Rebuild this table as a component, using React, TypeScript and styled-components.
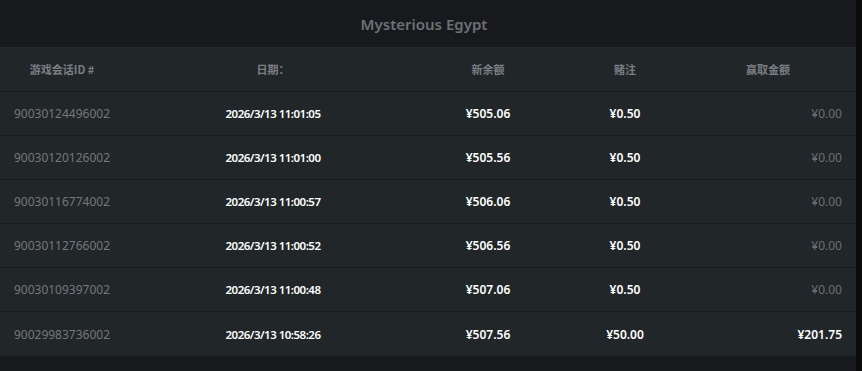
import React from 'react';
import styled, { createGlobalStyle } from 'styled-components';

type Round = {
  id: string;
  date: string;
  balance: string;
  bet: string;
  win: string;
};

const rounds: Round[] = [
  { id: '90030124496002', date: '2026/3/13 11:01:05', balance: '¥505.06', bet: '¥0.50', win: '¥0.00' },
  { id: '90030120126002', date: '2026/3/13 11:01:00', balance: '¥505.56', bet: '¥0.50', win: '¥0.00' },
  { id: '90030116774002', date: '2026/3/13 11:00:57', balance: '¥506.06', bet: '¥0.50', win: '¥0.00' },
  { id: '90030112766002', date: '2026/3/13 11:00:52', balance: '¥506.56', bet: '¥0.50', win: '¥0.00' },
  { id: '90030109397002', date: '2026/3/13 11:00:48', balance: '¥507.06', bet: '¥0.50', win: '¥0.00' },
  { id: '90029983736002', date: '2026/3/13 10:58:26', balance: '¥507.56', bet: '¥50.00', win: '¥201.75' },
];

const App: React.FC = () => {
  return (
    <>
      <GlobalStyle />
      <Panel>
        <TitleBar>Mysterious Egypt</TitleBar>
        <Table>
          <HeaderRow>
            <HeadCell>游戏会话ID #</HeadCell>
            <HeadCell>日期：</HeadCell>
            <HeadCell>新余额</HeadCell>
            <HeadCell>赌注</HeadCell>
            <HeadCell $last>赢取金额</HeadCell>
          </HeaderRow>
          {rounds.map((r) => (
            <Row key={r.id}>
              <IdCell>{r.id}</IdCell>
              <DateCell>{r.date}</DateCell>
              <Cell>{r.balance}</Cell>
              <Cell>{r.bet}</Cell>
              <WinCell $zero={r.win === '¥0.00'}>{r.win}</WinCell>
            </Row>
          ))}
        </Table>
      </Panel>
    </>
  );
};

export default App;

const GlobalStyle = createGlobalStyle`
  html, body {
    margin: 0;
    padding: 0;
    background: #0b0b0c;
  }
  body {
    font-family: 'Noto Sans', 'Noto Sans CJK SC', sans-serif;
  }
`;

const Panel = styled.div`
  width: 856px;
  height: 371px;
  background-color: #18191d;
`;

const TitleBar = styled.div`
  height: 47px;
  display: flex;
  align-items: center;
  justify-content: center;
  padding-right: 8px;
  box-sizing: border-box;
  font-size: 15px;
  font-weight: 600;
  color: #6c7075;
`;

const Table = styled.div`
  display: flex;
  flex-direction: column;
`;

const columns = '124px 298px 132px 142px 1fr';

const HeaderRow = styled.div`
  display: grid;
  grid-template-columns: ${columns};
  height: 44.5px;
  align-items: center;
  background-color: #212629;
  border-bottom: 1px solid #1a1d20;
  box-sizing: border-box;
`;

const HeadCell = styled.div<{ $last?: boolean }>`
  text-align: center;
  font-family: 'Noto Sans CJK SC', 'Noto Sans', sans-serif;
  font-size: 11px;
  font-weight: 700;
  color: #7b7f83;
  padding-right: ${(p) => (p.$last ? '16px' : '0')};
`;

const Row = styled.div`
  display: grid;
  grid-template-columns: ${columns};
  height: 44.2px;
  align-items: center;
  background-color: #212629;
  border-bottom: 1px solid #1a1d20;
  box-sizing: border-box;
`;

const Cell = styled.div`
  text-align: center;
  font-size: 12px;
  font-weight: 600;
  color: #ffffff;
`;

const DateCell = styled(Cell)`
  font-size: 11.5px;
  letter-spacing: -0.5px;
`;

const IdCell = styled(Cell)`
  font-weight: 400;
  color: #74787c;
`;

const WinCell = styled(Cell)<{ $zero: boolean }>`
  text-align: right;
  padding-right: 14px;
  font-weight: ${(p) => (p.$zero ? 400 : 600)};
  color: ${(p) => (p.$zero ? '#6a6e72' : '#ffffff')};
`;
